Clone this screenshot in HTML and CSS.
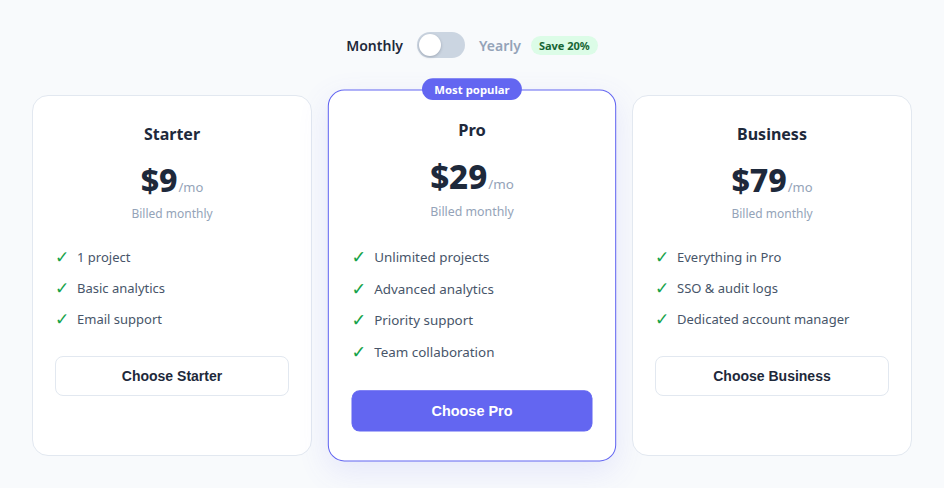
FILE: index.html
```html
<!DOCTYPE html>
<html lang="en">
<head>
  <meta charset="UTF-8">
  <meta name="viewport" content="width=device-width, initial-scale=1.0">
  <title>Pricing</title>
  <link rel="stylesheet" href="styles.css">
</head>
<body>
  <main class="pricing">
    <!-- Billing period switch -->
    <div class="billing">
      <span class="billing-label active">Monthly</span>
      <button class="switch" aria-label="Toggle yearly billing"><span class="knob"></span></button>
      <span class="billing-label">Yearly</span>
      <span class="save">Save 20%</span>
    </div>

    <!-- Plans -->
    <div class="plans">
      <div class="plan">
        <h3>Starter</h3>
        <div class="price"><span class="amount">$9</span><span class="per">/mo</span></div>
        <p class="billed">Billed monthly</p>
        <ul class="features">
          <li><span class="check">✓</span>1 project</li>
          <li><span class="check">✓</span>Basic analytics</li>
          <li><span class="check">✓</span>Email support</li>
        </ul>
        <button class="btn">Choose Starter</button>
      </div>

      <div class="plan featured">
        <span class="popular">Most popular</span>
        <h3>Pro</h3>
        <div class="price"><span class="amount">$29</span><span class="per">/mo</span></div>
        <p class="billed">Billed monthly</p>
        <ul class="features">
          <li><span class="check">✓</span>Unlimited projects</li>
          <li><span class="check">✓</span>Advanced analytics</li>
          <li><span class="check">✓</span>Priority support</li>
          <li><span class="check">✓</span>Team collaboration</li>
        </ul>
        <button class="btn btn-primary">Choose Pro</button>
      </div>

      <div class="plan">
        <h3>Business</h3>
        <div class="price"><span class="amount">$79</span><span class="per">/mo</span></div>
        <p class="billed">Billed monthly</p>
        <ul class="features">
          <li><span class="check">✓</span>Everything in Pro</li>
          <li><span class="check">✓</span>SSO &amp; audit logs</li>
          <li><span class="check">✓</span>Dedicated account manager</li>
        </ul>
        <button class="btn">Choose Business</button>
      </div>
    </div>
  </main>
</body>
</html>
```

FILE: styles.css
```css
* {
  margin: 0;
  padding: 0;
  box-sizing: border-box;
}

body {
  background-color: #f8fafc;
  font-family: "Noto Sans", "Open Sans", sans-serif;
  color: #1e293b;
}

.pricing {
  max-width: 944px;
  margin: 0 auto;
  padding: 32px 32px;
}

/* Billing switch */
.billing {
  display: flex;
  align-items: center;
  justify-content: center;
  gap: 12px;
  margin-bottom: 37px;
}
.billing-label {
  font-size: 14px;
  font-weight: 600;
  color: #94a3b8;
}
.billing-label.active {
  color: #1e293b;
}
.switch {
  width: 48px;
  height: 26px;
  border: none;
  border-radius: 13px;
  background-color: #cbd5e1;
  padding: 2px;
  display: flex;
  align-items: center;
  cursor: pointer;
  margin: 0 2px;
}
.knob {
  width: 22px;
  height: 22px;
  border-radius: 50%;
  background-color: #fff;
  box-shadow: 0 1px 3px rgba(15, 23, 42, 0.25);
}
.save {
  background-color: #dcfce7;
  color: #166534;
  font-size: 11px;
  font-weight: 700;
  padding: 2px 8px;
  border-radius: 999px;
  margin-left: -2px;
}

/* Plan cards */
.plans {
  display: grid;
  grid-template-columns: repeat(3, 1fr);
  gap: 20px;
}
.plan {
  background-color: #fff;
  border: 1px solid #e2e8f0;
  border-radius: 16px;
  padding: 26px 22px 28px;
  display: flex;
  flex-direction: column;
  text-align: center;
  position: relative;
}
.plan h3 {
  font-size: 16px;
  font-weight: 700;
  line-height: 24px;
  color: #1e293b;
}
.price {
  margin-top: 14px;
  line-height: 40px;
}
.amount {
  font-size: 32px;
  font-weight: 800;
  color: #1e293b;
}
.per {
  font-size: 13px;
  color: #94a3b8;
  margin-left: 1px;
}
.billed {
  margin-top: -2px;
  font-size: 12px;
  line-height: 18px;
  color: #94a3b8;
}
.features {
  list-style: none;
  text-align: left;
  margin: 19px 0 21px;
}
.features li {
  font-size: 13px;
  line-height: 21px;
  padding: 5px 0;
  color: #475569;
  display: flex;
  align-items: center;
}
.check {
  font-family: "DejaVu Sans", sans-serif;
  font-size: 17px;
  line-height: 21px;
  color: #16a34a;
  width: 22px;
  flex-shrink: 0;
}

.btn {
  height: 40px;
  border: 1px solid #e2e8f0;
  border-radius: 8px;
  background-color: #fff;
  color: #1e293b;
  font-family: "Liberation Sans", Arial, sans-serif;
  font-size: 14px;
  font-weight: 700;
  cursor: pointer;
}
.btn-primary {
  background-color: #6366f1;
  border-color: #6366f1;
  color: #fff;
}

/* Highlighted plan */
.featured {
  border: 1.5px solid #6366f1;
  transform: scale(1.03);
  box-shadow: 0 10px 30px rgba(99, 102, 241, 0.12);
}
.popular {
  position: absolute;
  top: -12px;
  left: 50%;
  transform: translateX(-50%);
  background-color: #6366f1;
  color: #fff;
  font-size: 11px;
  font-weight: 700;
  line-height: 21px;
  padding: 0 12px;
  border-radius: 999px;
  white-space: nowrap;
}
```
